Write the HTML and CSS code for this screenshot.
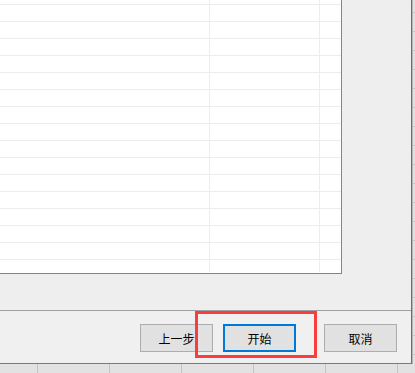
FILE: index.html
```html
<!DOCTYPE html>
<html lang="zh-CN">
<head>
  <meta charset="UTF-8" />
  <meta name="viewport" content="width=device-width, initial-scale=1.0"/>
  <title>开始</title>
  <link rel="stylesheet" href="styles.css">
</head>
<body>
  <div class="window">
    <div class="main">
      <div class="list">
        <div class="rows">
          <div class="row"><span class="cell name"></span><span class="cell value"></span><span class="cell extra"></span></div>
          <div class="row"><span class="cell name"></span><span class="cell value"></span><span class="cell extra"></span></div>
          <div class="row"><span class="cell name"></span><span class="cell value"></span><span class="cell extra"></span></div>
          <div class="row"><span class="cell name"></span><span class="cell value"></span><span class="cell extra"></span></div>
          <div class="row"><span class="cell name"></span><span class="cell value"></span><span class="cell extra"></span></div>
          <div class="row"><span class="cell name"></span><span class="cell value"></span><span class="cell extra"></span></div>
          <div class="row"><span class="cell name"></span><span class="cell value"></span><span class="cell extra"></span></div>
          <div class="row"><span class="cell name"></span><span class="cell value"></span><span class="cell extra"></span></div>
          <div class="row"><span class="cell name"></span><span class="cell value"></span><span class="cell extra"></span></div>
          <div class="row"><span class="cell name"></span><span class="cell value"></span><span class="cell extra"></span></div>
          <div class="row"><span class="cell name"></span><span class="cell value"></span><span class="cell extra"></span></div>
          <div class="row"><span class="cell name"></span><span class="cell value"></span><span class="cell extra"></span></div>
          <div class="row"><span class="cell name"></span><span class="cell value"></span><span class="cell extra"></span></div>
          <div class="row"><span class="cell name"></span><span class="cell value"></span><span class="cell extra"></span></div>
          <div class="row"><span class="cell name"></span><span class="cell value"></span><span class="cell extra"></span></div>
          <div class="row"><span class="cell name"></span><span class="cell value"></span><span class="cell extra"></span></div>
          <div class="row filler"><span class="cell name"></span><span class="cell value"></span><span class="cell extra"></span></div>
        </div>
      </div>
      <div class="side"></div>
    </div>

    <div class="footer">
      <button class="btn">上一步</button>
      <button class="btn primary">开始</button>
      <button class="btn cancel">取消</button>
      <div class="highlight"></div>
    </div>
  </div>
</body>
</html>
```

FILE: styles.css
```css
body {
  margin: 0;
  height: 373px;
  overflow: hidden;
  font-family: "Noto Sans CJK SC", "Microsoft YaHei", sans-serif;
  background-color: #e2e2e2;
  background-image:
    linear-gradient(to right, #c4c4c4 1px, transparent 1px),
    linear-gradient(to bottom, #c4c4c4 1px, transparent 1px);
  background-size: 72px 100%, 100% 19px;
  background-position: 37px 0, 0 31px;
}

.window {
  width: 411px;
  background-color: #f0f0f0;
  border-right: 1px solid #6e6e6e;
  border-bottom: 1px solid #7a7a7a;
  box-shadow: 1px 0 0 #b4b4b4;
}

.main {
  display: flex;
  height: 310px;
  background-color: #eeeeee;
}

.list {
  width: 341px;
  height: 273px;
  background-color: #ffffff;
  border-right: 1px solid #83838f;
  border-bottom: 1px solid #83838f;
  overflow: hidden;
}

.rows {
  display: flex;
  flex-direction: column;
  height: 285px;
  margin-top: -12px;
}

.row {
  display: flex;
  height: 16px;
  border-bottom: 1px solid #ececec;
}

.row.filler {
  flex: 1;
  border-bottom: none;
  margin-bottom: 1px;
}

.cell {
  display: block;
}

.cell.name {
  width: 209px;
  border-right: 1px solid #ececec;
}

.cell.value {
  width: 109px;
  border-right: 1px solid #ececec;
}

.cell.extra {
  flex: 1;
}

.side {
  flex: 1;
}

.footer {
  position: relative;
  display: flex;
  justify-content: flex-end;
  height: 53px;
  padding: 13px 14px 0 0;
  box-sizing: border-box;
  border-top: 1px solid #a0a0a0;
}

.btn {
  width: 73px;
  height: 28px;
  margin-left: 10px;
  padding: 0;
  background-color: #e1e1e1;
  border: 1px solid #adadad;
  font-family: "Noto Sans CJK SC", "Microsoft YaHei", sans-serif;
  font-size: 12px;
  color: #000000;
}

.btn.primary {
  border: 2px solid #0078d7;
}

.btn.cancel {
  margin-left: 28px;
}

.highlight {
  position: absolute;
  left: 195px;
  top: 0;
  width: 122px;
  height: 47px;
  border: 3px solid #f73d3d;
  box-sizing: border-box;
}
```
